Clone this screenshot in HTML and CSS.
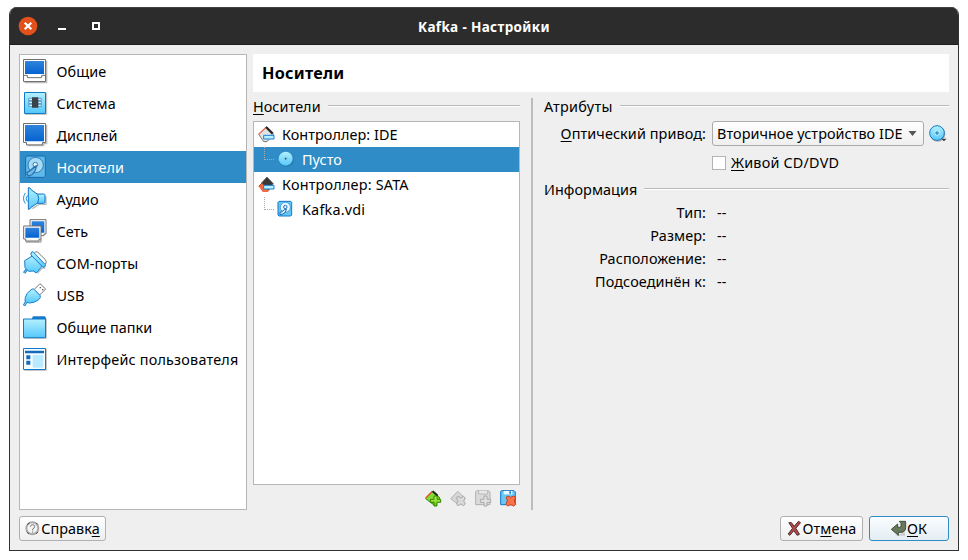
FILE: index.html
```html
<!DOCTYPE html>
<html lang="ru">
<head>
<meta charset="utf-8">
<title>Kafka - Настройки</title>
<link rel="stylesheet" href="styles.css">
</head>
<body>
<svg class="defs" width="0" height="0">
  <defs>
    <linearGradient id="sky" x1="0" y1="0" x2="0" y2="1"><stop offset="0" stop-color="#b4f0ff"/><stop offset="1" stop-color="#55c8fb"/></linearGradient>
    <linearGradient id="blue" x1="0" y1="0" x2="0" y2="1"><stop offset="0" stop-color="#2f83dc"/><stop offset="1" stop-color="#0562d0"/></linearGradient>
    <linearGradient id="lime" x1="0" y1="0" x2="0" y2="1"><stop offset="0" stop-color="#c4f66a"/><stop offset="1" stop-color="#62c400"/></linearGradient>
  </defs>
</svg>
<div class="window">
  <header class="titlebar">
    <svg class="controls" viewBox="0 0 90 20">
      <circle cx="10" cy="9" r="9.300" fill="#e2511c"/>
      <path d="M6.700 5.700l6.600 6.600M13.300 5.700l-6.600 6.600" stroke="#fff" stroke-width="2.200"/>
      <path d="M40 12h8" stroke="#fff" stroke-width="2"/>
      <path d="M75 6h6v6h-6z" fill="none" stroke="#fff" stroke-width="2"/>
    </svg>
    <h1>Kafka - Настройки</h1>
  </header>
  <div class="content">
    <div class="main">
      <nav class="categories">
        <div class="cat"><svg viewBox="0 0 72 72"><path d="M5 71h66V5" fill="none" stroke="#bbb" stroke-width="4"/><path d="M1.500 1.500h66v66h-66z" fill="#fff" stroke="#707070" stroke-width="3"/><path d="M6 6h57v39H6z" fill="url(#blue)"/><path d="M2 49h11v7h43v-7h11" fill="none" stroke="#707070" stroke-width="3"/></svg><span>Общие</span></div>
        <div class="cat"><svg viewBox="0 0 72 72"><path d="M6 70h65V6" fill="none" stroke="#bbb" stroke-width="3"/><path d="M4.500 4.500h63v63h-63z" fill="url(#sky)" stroke="#137ac9" stroke-width="3"/><path d="M17 22h38v6H17zM17 31h38v6H17zM17 40h38v6H17z" fill="#fff" stroke="#2677b8" stroke-width="2"/><path d="M27 19h19v31H27z" fill="#39434a"/></svg><span>Система</span></div>
        <div class="cat"><svg viewBox="0 0 72 72"><path d="M13 68h49v-6h9V5" fill="none" stroke="#bbb" stroke-width="4"/><path d="M1.500 1.500h66v57h-9v7h-48v-7h-9z" fill="#fff" stroke="#707070" stroke-width="3"/><path d="M6 6h57v49H6z" fill="url(#blue)"/></svg><span>Дисплей</span></div>
        <div class="cat selected"><svg viewBox="0 0 72 72"><path d="M11 3h53l3 3v58l-3 3H11l-3-3V6z" fill="#60b9eb" stroke="#1769ae" stroke-width="3"/><circle cx="38" cy="30" r="23" fill="#a8daf3" stroke="#2b80bd" stroke-width="3"/><circle cx="37" cy="29" r="7" fill="#e4f4fb" stroke="#2b80bd" stroke-width="3"/><path d="M40 33C26 38 26 48 12 52q-1 9 6 11c14-3 20-16 22-30z" fill="#70bae5" stroke="#2671ae" stroke-width="4"/></svg><span>Носители</span></div>
        <div class="cat"><svg viewBox="0 0 72 72"><path d="M7 18q-11 16 0 32M13 25q-7 10 0 19" fill="none" stroke="#2493db" stroke-width="3"/><path d="M28 65l20-13h21V28" fill="none" stroke="#bbb" stroke-width="4"/><path d="M42 21h20q4 0 4 4v20q0 4-4 4H42z" fill="url(#sky)" stroke="#1274c7" stroke-width="3"/><path d="M16 2q6-1 8 6l20 14q6 13 0 26L24 61q-3 7-8 6z" fill="url(#sky)" stroke="#1274c7" stroke-width="3"/></svg><span>Аудио</span></div>
        <div class="cat"><svg viewBox="0 0 72 72"><path d="M21 2h48v43h-6v5H26v-5h-5z" fill="#fff" stroke="#707070" stroke-width="3"/><path d="M26 7h38v34H26z" fill="url(#blue)"/><path d="M8 69h45v-6h4" fill="none" stroke="#aaa" stroke-width="4"/><path d="M2 21h52v39h-6v6H8v-6H2z" fill="#fff" stroke="#707070" stroke-width="3"/><path d="M7 26h42v30H7z" fill="url(#blue)"/></svg><span>Сеть</span></div>
        <div class="cat"><svg viewBox="0 0 72 72"><path d="M34 6q4-6 10-3l23 23q5 6 1 13l-6 5-32-31z" fill="#fff" stroke="#777" stroke-width="3"/><path d="M43 67l15-16h9" fill="none" stroke="#bbb" stroke-width="4"/><path d="M12 55L3 66" stroke="#1780cc" stroke-width="8"/><path d="M12 55L4 65" stroke="#77d5fb" stroke-width="3"/><path d="M5 29l25-15 28 30-15 19-5 3-5-6-16 1L6 50z" fill="url(#sky)" stroke="#1780cc" stroke-width="3"/><path d="M24 5l6-3 37 39-1 6-6 2-36-37z" fill="url(#sky)" stroke="#1780cc" stroke-width="3"/></svg><span>COM-порты</span></div>
        <div class="cat"><svg viewBox="0 0 72 72"><path d="M51 2l17 16-18 18-17-16z" fill="#fff" stroke="#777" stroke-width="3" stroke-linejoin="round"/><path d="M50 14h4M57 20h4" stroke="#555" stroke-width="4"/><path d="M10 56L3 68" stroke="#1780cc" stroke-width="8"/><path d="M33 19l18 18q4 7-4 13Q34 60 20 60q-8 0-14-6-1-11 6-22Q20 22 28 18q3-1 5 1z" fill="url(#sky)" stroke="#1780cc" stroke-width="3"/><path d="M11 55L4 66" stroke="#77d5fb" stroke-width="3"/></svg><span>USB</span></div>
        <div class="cat"><svg viewBox="0 0 72 72"><path d="M26 12l4-8h36l4 8" fill="#1879c8"/><path d="M4 70h66V12" fill="none" stroke="#bbb" stroke-width="3"/><path d="M1.500 12h66v56h-66z" fill="url(#sky)" stroke="#137ac9" stroke-width="3"/></svg><span>Общие папки</span></div>
        <div class="cat wide"><svg viewBox="0 0 72 72"><path d="M4 70h66V6" fill="none" stroke="#bbb" stroke-width="3"/><path d="M1.500 4.500h66v63h-66z" fill="#f5fcff" stroke="#137ac9" stroke-width="3"/><path d="M6 11h57v8H6zM10 25h12v12H10zM10 41h12v12H10z" fill="#126cbb"/><path d="M29 24h32v38H29z" fill="#b9eaff"/></svg><span>Интерфейс пользователя</span></div>
      </nav>
      <section class="page">
        <h2>Носители</h2>
        <div class="columns">
          <div class="storage">
            <div class="group"><span><u>Н</u>осители</span><i></i></div>
            <div class="tree">
              <div class="node"><svg class="ctl" viewBox="0 0 51 51"><path d="M2 25L25 3l22 21-20 23H17z" fill="#e2e2e2" stroke="#777" stroke-width="3"/><path d="M2 25L22 6" stroke="#ea7555" stroke-width="4"/><path d="M24 3l20 20" stroke="#292929" stroke-width="7"/><path d="M17 28h31v11H17z" fill="#b9efff" stroke="#1680d3" stroke-width="3"/></svg><span>Контроллер: IDE</span></div>
              <div class="node child picked"><b class="branch"></b><svg class="leaf" viewBox="0 0 48 48"><circle cx="25" cy="26" r="22" fill="#267bae"/><circle cx="23" cy="23" r="21" fill="url(#sky)"/><circle cx="23" cy="23" r="6" fill="#83cee8"/><circle cx="23" cy="23" r="2.500" fill="#075f8e"/></svg><span>Пусто</span></div>
              <div class="node"><svg class="ctl" viewBox="0 0 51 51"><path d="M2 31l13-12 20 23-6 6H14z" fill="#f16a42"/><path d="M11 20L27 3l19 20-14 19z" fill="#393939" stroke="#555" stroke-width="2"/><path d="M2 31l12-12" stroke="#b9401e" stroke-width="3"/><path d="M17 28h31v11H17z" fill="#b9efff" stroke="#1680d3" stroke-width="3"/></svg><span class="sata">Контроллер: SATA</span></div>
              <div class="node child"><b class="branch"></b><svg class="leaf" viewBox="0 0 48 48"><path d="M3 1h35l3 3v38l-3 3H3l-3-3V4z" fill="#64c5f7" stroke="#1377ca" stroke-width="3"/><circle cx="22" cy="19" r="15" fill="#e5f8ff" stroke="#2684cd" stroke-width="2"/><circle cx="22" cy="18" r="5" fill="#fff" stroke="#126bbd" stroke-width="3"/><path d="M25 24C14 26 15 34 6 34v7c12-1 18-8 19-17z" fill="#dff8ff" stroke="#1266ae" stroke-width="3"/></svg><span class="vdi">Kafka.vdi</span></div>
            </div>
            <div class="tools">
              <svg viewBox="0 0 51 51"><path d="M2 26L23 4l22 20-18 21z" fill="#86dc30" stroke="#388600" stroke-width="3"/><path d="M2 24L22 4" stroke="#e75937" stroke-width="4"/><path d="M23 4l15 13" stroke="#222" stroke-width="6"/><path d="M27 18h9v10h11v9H36v11h-9V37H16v-9h11z" fill="url(#lime)" stroke="#318500" stroke-width="3"/></svg>
              <svg viewBox="0 0 51 51"><path d="M2 26L23 4l22 20-18 21z" fill="#d6d6d6" stroke="#b4b4b4" stroke-width="3"/><path d="M19 23l5-4 8 5 8-5 6 5-5 9 5 9-6 5-8-5-8 5-5-5 5-9z" fill="#dadada" stroke="#a8a8a8" stroke-width="3"/></svg>
              <svg viewBox="0 0 51 51"><path d="M5 2h36l4 4v38H2V5z" fill="#dadada" stroke="#b0b0b0" stroke-width="3"/><path d="M11 2v10h27V2" fill="#e8e8e8" stroke="#b8b8b8" stroke-width="3"/><path d="M27 18h9v10h11v9H36v11h-9V37H16v-9h11z" fill="#e2e2e2" stroke="#aaa" stroke-width="3"/></svg>
              <svg viewBox="0 0 51 51"><path d="M4 2h38l4 4v38H2V4z" fill="#67c7f7" stroke="#1876c2" stroke-width="3"/><path d="M11 3h26v10H11z" fill="#ecfbff"/><path d="M28 4h5v7h-5z" fill="#237ec7"/><path d="M19 21l5-3 8 4 9-4 6 4-4 11 4 10-6 5-9-4-9 4-5-5 4-10z" fill="#fb724b" stroke="#c9401f" stroke-width="3"/></svg>
            </div>
          </div>
          <div class="splitter"></div>
          <div class="details">
            <div class="group"><span class="attr">Атрибуты</span><i></i></div>
            <div class="row drive"><label class="key"><span><u>О</u>птический привод:</span></label><div class="combo"><span>Вторичное устройство IDE</span><svg viewBox="0 0 9 5"><path d="M0.500 0h8L4.500 5z" fill="#555"/></svg></div><svg class="disc" viewBox="0 0 54 54"><circle cx="26" cy="27" r="23" fill="#aaa"/><circle cx="24" cy="24" r="22" fill="url(#sky)" stroke="#147bc7" stroke-width="3"/><circle cx="24" cy="24" r="8" fill="#e1f8ff" opacity=".6"/><path d="M21 21h6v6h-6z" fill="#a7edff" stroke="#1576ba" stroke-width="3"/><path d="M36 41h17l-8 8z" fill="#444"/></svg></div>
            <label class="live"><span class="box"></span><span><u>Ж</u>ивой CD/DVD</span></label>
            <div class="group info"><span>Информация</span><i></i></div>
            <div class="row"><span class="key">Тип:</span><span class="val">--</span></div>
            <div class="row"><span class="key">Размер:</span><span class="val">--</span></div>
            <div class="row"><span class="key">Расположение:</span><span class="val">--</span></div>
            <div class="row"><span class="key">Подсоединён к:</span><span class="val">--</span></div>
          </div>
        </div>
      </section>
    </div>
    <footer>
      <button class="help"><svg viewBox="0 0 45 45"><circle cx="22" cy="22" r="18" fill="#f4f4f4" stroke="#a8a8a8" stroke-width="6"/><path d="M6 11l8-6M33 5l6 6M5 33l7 6M33 39l6-6" stroke="#555" stroke-width="3"/><path d="M16 17q1-6 7-6t6 6q0 4-6 7v4M23 31v4" fill="none" stroke="#777" stroke-width="3"/></svg><span>Справк<u>а</u></span></button>
      <button class="cancel"><svg viewBox="0 0 42 45"><path d="M4 5h8l8 11L33 1l6 4-14 17 11 18-7 3-10-14L7 43l-5-4 13-17z" fill="#b8474a" stroke="#4c3030" stroke-width="3"/></svg><span>От<u>м</u>ена</span></button>
      <button class="ok"><svg viewBox="0 0 45 45"><path d="M13 44h29v-10z" fill="#ccc"/><path d="M25 1h19v19q-1 14-14 14h-8v9L1 25 20 9v10h5q5 0 5-5V7z" fill="#68785b" stroke="#424d3c" stroke-width="3"/></svg><span><u>О</u>К</span></button>
    </footer>
  </div>
</div>
</body>
</html>
```
FILE: styles.css
```css
* { box-sizing: border-box; }
body { margin: 0; padding: 7px 9px; background: #fff; color: #000; font: 14.4px/20px "Noto Sans", "Open Sans", sans-serif; letter-spacing: .06px; }
.defs { display: block; height: 0; }
svg { display: block; flex: none; overflow: visible; }
u { text-decoration-thickness: 1px; text-underline-offset: 2px; text-decoration-skip-ink: none; }
span { white-space: nowrap; }
.window { width: 950px; height: 544px; display: flex; flex-direction: column; border: 1px solid #303336; border-top: 0; border-radius: 8px 8px 0 0; background: #efefef; overflow: hidden; }
.titlebar { height: 38px; flex: none; display: grid; grid-template-columns: 90px 1fr 90px; align-items: center; padding: 1px 8px 0; background: #2c2c2c; border-top: 1px solid #414141; border-bottom: 1px solid #1e1e1e; color: #fff; }
.controls { width: 90px; height: 20px; }
h1 { margin: 0; text-align: center; font-size: 13.5px; font-weight: 700; line-height: 20px; letter-spacing: .35px; }
.content { flex: 1; display: flex; flex-direction: column; padding: 9px 9px; gap: 6px; }
.main { display: flex; gap: 6px; height: 456px; }
.categories { width: 228px; border: 1px solid #b6b6b6; background: #fff; }
.cat { height: 32px; display: flex; align-items: center; padding-left: 3px; gap: 9.5px; }
.cat span { padding-top: 2px; }
.wide { letter-spacing: .2px; }
.cat svg { width: 24px; height: 24px; }
.selected, .picked { background: #308cc6; color: #fff; }
.page { flex: 1; display: flex; flex-direction: column; }
h2 { height: 38px; margin: 0; padding: 9px 9px; background: #fff; font-size: 16.2px; line-height: 20px; letter-spacing: .25px; }
.columns { flex: 1; display: flex; padding-top: 5px; }
.storage { width: 267px; }
.group { height: 20px; display: flex; align-items: center; justify-content: space-between; }
.group i { height: 2px; margin-bottom: 2px; border-top: 1px solid #b9b9b9; border-bottom: 1px solid #fff; }
.storage .group i { width: 192px; }
.details .group i { width: 329px; }
.details .info i { width: 305px; }
.attr { letter-spacing: .3px; }
.sata { letter-spacing: .2px; }
.vdi { letter-spacing: .2px; }
.tree { height: 364px; margin-top: 4px; border: 1px solid #b6b6b6; background: #fff; }
.node { height: 25px; display: flex; align-items: center; padding-left: 4px; gap: 7px; }
.ctl { width: 17px; height: 17px; }
.child { padding-left: 10px; gap: 0; }
.branch { width: 10px; height: 13px; margin-bottom: 12px; border-left: 1px dotted #aaa; border-bottom: 1px dotted #aaa; }
.leaf { width: 16px; height: 16px; margin: 0 8px 1px 4px; }
.tools { display: flex; justify-content: flex-end; gap: 8px; padding: 5px 3px 0 0; }
.tools svg { width: 17px; height: 17px; }
.splitter { width: 2px; height: 412px; margin: 1px 11px 0; background: #bdbdbd; }
.details { width: 405px; }
.row { display: flex; height: 23px; align-items: center; }
.key { width: 162px; display: flex; justify-content: flex-end; letter-spacing: .1px; }
.val { margin-left: 11px; }
.drive { height: 25px; margin-top: 4px; }
.combo { width: 212px; height: 25px; margin: 0 5px 0 6px; padding: 0 6px 0 4px; display: flex; align-items: center; justify-content: space-between; border: 1px solid #ababab; border-radius: 3px; background: linear-gradient(#fff, #efefef); }
.combo svg { width: 9px; height: 5px; }
.disc { width: 18px; height: 18px; }
.live { display: flex; align-items: center; gap: 5px; margin: 6px 0 0 168px; height: 22px; letter-spacing: .2px; }
.box { width: 14px; height: 14px; border: 1px solid #b4b4b4; background: #fff; }
.info { margin: 6px 0 1px; }
footer { display: flex; gap: 6px; }
button { height: 25px; display: flex; align-items: center; justify-content: center; padding: 0; gap: 1px; border: 1px solid #b0b0b0; border-radius: 3px; background: linear-gradient(#fff, #efefef); font: inherit; letter-spacing: .06px; color: #000; }
button svg { width: 15px; height: 15px; }
.help { width: 87px; margin-right: auto; }
.cancel { width: 83px; }
.ok { width: 80px; border-color: #308cc6; background: linear-gradient(#fbfdff, #e3edf3); }
```
